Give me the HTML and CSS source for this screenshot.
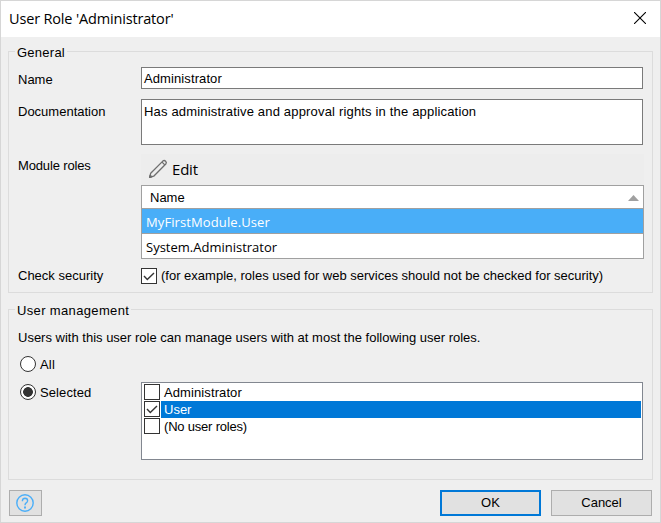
FILE: index.html
```html
<!DOCTYPE html>
<html lang="en">
<head>
<meta charset="utf-8">
<title>User Role 'Administrator'</title>
<link rel="stylesheet" href="styles.css">
</head>
<body>
<div class="dialog">
  <header class="titlebar">
    <h1 class="title">User Role 'Administrator'</h1>
    <svg class="close" width="12" height="12" viewBox="0 0 12 12"><path d="M0 0L12 12M12 0L0 12" fill="none" stroke="#000" stroke-width="1.1"/></svg>
  </header>
  <main class="content">
    <section class="group general">
      <h2 class="legend"><span class="t-general">General</span></h2>
      <div class="row row-name">
        <span class="label">Name</span>
        <div class="field"><span class="t-admin">Administrator</span></div>
      </div>
      <div class="row row-doc">
        <span class="label">Documentation</span>
        <div class="field area"><span class="t-has">Has administrative and approval rights in the application</span></div>
      </div>
      <div class="row row-modules">
        <span class="label t-modules">Module roles</span>
        <div class="modules">
          <div class="toolbar">
            <svg width="20" height="20" viewBox="0 0 20 20"><g fill="none" stroke="#6e6e6e" stroke-width="1.3" stroke-linejoin="round"><path d="M1.6 18.4L2.7 14.2L14.8 2.1Q16.2 .9 17.6 2.2Q19 3.6 17.8 5L5.7 17.2Z"/><path d="M14 3.1L16.8 5.9"/><path d="M1.6 18.4L2.2 16.3L3.7 17.8Z" fill="#6e6e6e"/></g></svg>
            <span class="t-edit">Edit</span>
          </div>
          <div class="table">
            <div class="head"><span>Name</span><svg width="11" height="6" viewBox="0 0 11 6"><path d="M5.5 0L11 6H0Z" fill="#a0a0a0"/></svg></div>
            <div class="item chosen"><span class="t-mod">MyFirstModule.User</span></div>
            <div class="item"><span>System.Administrator</span></div>
          </div>
        </div>
      </div>
      <div class="row row-check">
        <span class="label">Check security</span>
        <span class="box"><svg width="14" height="14" viewBox="0 0 14 14"><path d="M2 7L5.3 10.5L12 4" fill="none" stroke="#333" stroke-width="1.4"/></svg></span>
        <span class="hint">(for example, roles used for web services should not be checked for security)</span>
      </div>
    </section>
    <section class="group management">
      <h2 class="legend"><span class="t-mgmt">User management</span></h2>
      <p class="note"><span class="t-note">Users with this user role can manage users with at most the following user roles.</span></p>
      <div class="option"><span class="radio"></span><span class="option-text t-all">All</span></div>
      <div class="row row-selected">
        <div class="option"><span class="radio on"></span><span class="option-text t-sel">Selected</span></div>
        <div class="list">
          <div class="entry"><span class="box"></span><span class="entry-text"><span class="t-admin">Administrator</span></span></div>
          <div class="entry active"><span class="box"><svg width="14" height="14" viewBox="0 0 14 14"><path d="M2 7L5.3 10.5L12 4" fill="none" stroke="#333" stroke-width="1.4"/></svg></span><span class="entry-text"><span>User</span></span></div>
          <div class="entry"><span class="box"></span><span class="entry-text"><span class="t-none">(No user roles)</span></span></div>
        </div>
      </div>
    </section>
    <footer class="footer">
      <div class="button help"><svg width="18" height="18" viewBox="0 0 18 18" fill="none" stroke="#4aaef8" stroke-width="1.4"><circle cx="9" cy="9" r="8.2"/><path d="M6.4 7.2V6.7Q6.6 4.3 9 4.3Q11.6 4.4 11.6 6.7Q11.5 8.1 10.2 8.8Q9 9.5 9 11.3"/><path d="M9 12.6V14.4" stroke-width="1.9"/></svg></div>
      <div class="button ok"><span>OK</span></div>
      <div class="button cancel"><span>Cancel</span></div>
    </footer>
  </main>
</div>
</body>
</html>
```
FILE: styles.css
```css
* { box-sizing: border-box; }
body { margin: 0; font: 13px/16px "Liberation Sans", Arial, sans-serif; color: #000; }
h1, h2, p { margin: 0; font-weight: normal; font-size: inherit; }
svg { display: block; flex: none; }
span { white-space: nowrap; }
.dialog { width: 661px; height: 523px; border: 1px solid #d6d6d6; background: #efefef; }
.titlebar { height: 36px; background: #fff; display: flex; justify-content: space-between; align-items: center; padding: 0 14px 0 8px; }
.title { font: 14.5px/20px "Open Sans", sans-serif; letter-spacing: -0.16px; }
.close { margin-bottom: 2px; }
.content { padding: 14px 7px 0; }
.group { border: 1px solid #dcdcdc; width: 645px; }
.general { height: 242px; }
.management { height: 171px; margin-top: 16px; }
.legend { width: max-content; height: 16px; margin: -8px 0 0 6px; padding: 1px 2px 0; background: #efefef; }
.row { display: flex; padding-left: 9px; }
.label { width: 123px; flex: none; }
.row-name { margin-top: 7px; height: 22px; }
.row-name .label { padding-top: 5px; }
.field { width: 502px; height: 22px; border: 1px solid #7a7a7a; background: #fff; padding: 3px 2px; }
.row-doc { margin-top: 10px; height: 46px; }
.row-doc .label { padding-top: 5px; }
.area { height: 46px; padding-top: 4px; }
.row-modules { margin-top: 9px; }
.row-modules .label { padding-top: 4px; }
.modules { width: 503px; }
.toolbar { height: 31px; background: #ededed; display: flex; align-items: center; padding-left: 7px; gap: 4px; font: 15px/20px "Open Sans", sans-serif; }
.toolbar svg { margin-top: -1px; }
.toolbar span { margin-top: -1px; }
.table { border: 1px solid #a0a0a0; background: #fff; }
.head { height: 22px; display: flex; justify-content: space-between; align-items: center; padding: 2px 4px 0 8px; }
.item { height: 25px; border-top: 1px solid #a0a0a0; padding: 4px 0 0 4px; font: 13px/19px "Open Sans", sans-serif; }
.chosen { background: #49aef8; color: #fff; }
.row-check { margin-top: 9px; height: 16px; }
.box { width: 16px; height: 16px; flex: none; border: 1px solid #333; background: #fff; }
.hint { margin-left: 4px; }
.note { padding: 12px 0 0 9px; height: 28px; }
.option { display: flex; gap: 4px; padding-left: 11px; width: 132px; flex: none; margin-top: 10px; height: 16px; }
.option-text { padding-top: 1px; }
.radio { width: 16px; height: 16px; border: 1px solid #333; border-radius: 50%; background: #fff; flex: none; }
.on { background: radial-gradient(circle, #333 4.5px, #fff 5.2px); }
.row-selected { padding: 0; margin-top: 10px; }
.row-selected .option { margin-top: 2px; }
.list { width: 502px; height: 78px; border: 1px solid #828790; background: #fff; padding: 1px 1px 0 2px; }
.entry { display: flex; gap: 1px; height: 17px; }
.entry-text { flex: 1; padding: 1px 0 0 3px; }
.active .entry-text { background: #0078d7; color: #fff; }
.footer { display: flex; margin: 10px 1px 0 1px; }
.button { width: 101px; height: 26px; background: #e1e1e1; border: 1px solid #adadad; display: flex; align-items: center; justify-content: center; }
.help { width: 33px; margin-right: auto; padding-right: 1px; }
.ok { border: 2px solid #0078d7; margin-right: 10px; }
.t-general { letter-spacing: 0.25px; }
.t-admin { letter-spacing: 0.1px; }
.t-has { letter-spacing: 0.175px; }
.t-modules { letter-spacing: -0.15px; }
.t-mgmt { letter-spacing: 0.35px; }
.t-none { letter-spacing: -0.2px; }
.t-sel { letter-spacing: 0.1px; }
.t-all { letter-spacing: 0.2px; }
.t-edit { letter-spacing: -0.2px; }
.t-mod { letter-spacing: 0.1px; }
```
